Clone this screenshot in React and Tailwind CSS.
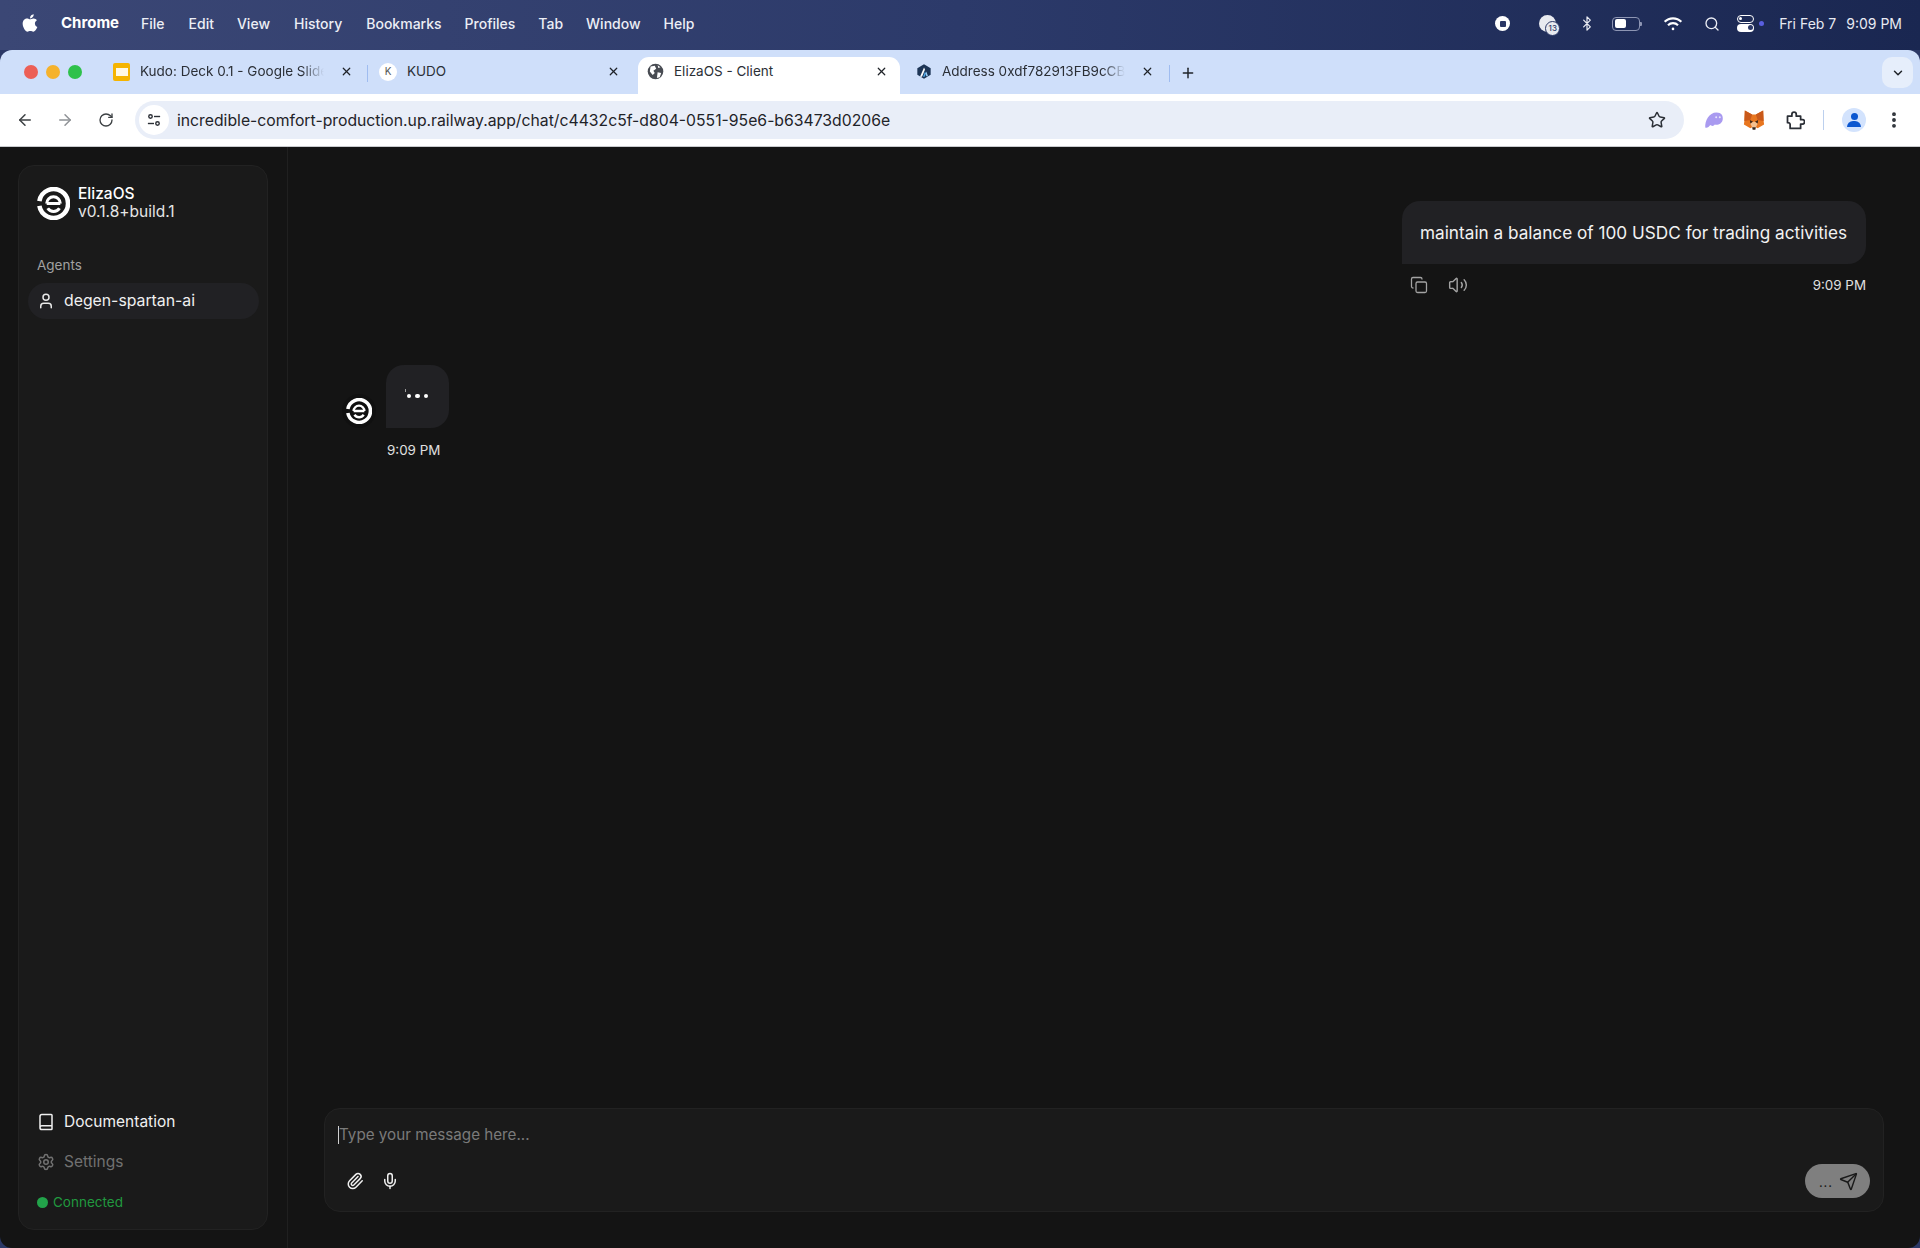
import React from "react";
import { Book, Bluetooth, ChevronDown, Copy, EllipsisVertical, ArrowLeft, ArrowRight, RotateCw, Star, Plus, X, Search, Mic, Paperclip, Send, Settings, User, Volume2 } from "lucide-react";
import { FaApple } from "react-icons/fa";

function ElizaLogo({ className }) {
  return (
    <svg viewBox="0 0 32 32" className={className} fill="none">
      <path d="M2.3 13.6 A14 14 0 1 1 2.3 18.4" stroke="#fff" strokeWidth="4.4" />
      <path d="M9.4 16 H22.6 M9.4 16 A6.6 6.6 0 0 1 22.6 16" stroke="#fff" strokeWidth="2.9" />
      <path d="M10.4 20.6 A6.8 6.8 0 0 0 21.8 20.6" stroke="#fff" strokeWidth="3" />
    </svg>
  );
}

function Fox() {
  return (
    <svg viewBox="0 0 24 24" className="w-[22px] h-[22px]">
      <path d="M2 1.5 L10 6 H14 L22 1.5 L22.5 13 L23 17 L16 21 L14 20 H10 L8 21 L1 17 L1.5 13 Z" fill="#e8761f" />
      <path d="M2 1.5 L10 6 L8 12 L1.5 13 Z M22 1.5 L14 6 L16 12 L22.5 13 Z" fill="#c9591a" />
      <path d="M7.5 12 L11 14 L8 16 Z M16.5 12 L13 14 L16 16 Z" fill="#3b2a1e" />
      <path d="M8 16 L11 14 H13 L16 16 L14 20 H10 Z" fill="#f3c08f" />
      <path d="M10 20 H14 L13.5 22.5 H10.5 Z" fill="#33261c" />
    </svg>
  );
}

function Ghost() {
  return (
    <svg viewBox="0 0 24 24" className="w-[20px] h-[20px]">
      <path d="M1.5 21 C1 13 6 3 15 3 C21 3 23 7 22.5 11 C22 16 17 18.5 13 17.5 C11.5 20 8.5 19 7.5 18 C6 20.5 3.5 22 1.5 21 Z" fill="#a99af0" />
      <circle cx="14.6" cy="8.6" r="1.2" fill="#e8e4fb" />
      <circle cx="19" cy="8.6" r="1.2" fill="#e8e4fb" />
    </svg>
  );
}

function ExtensionIcon() {
  return (
    <svg viewBox="0 0 24 24" className="w-[21px] h-[21px]" fill="none" stroke="#2b2f36" strokeWidth="2" strokeLinejoin="round">
      <path d="M4 7 H9 V5 A2.5 2.5 0 0 1 14 5 V7 H19 V11 H21 A2.5 2.5 0 0 1 21 16 H19 V21 H7 V16.5 A2.5 2.5 0 0 0 4 14.5 Z" />
    </svg>
  );
}

function Tab({ children, title, w, active, fade }) {
  return (
    <div className={`relative flex items-center h-[37px] pb-[8px] shrink-0 ${w} ${active ? "bg-white rounded-t-[11px]" : ""}`}>
      {children}
      <span className={`text-[13.5px] text-[#2b2f36] whitespace-nowrap overflow-hidden flex-1 ${fade ? "mr-[16px] [mask-image:linear-gradient(to_right,#000_88%,transparent)]" : ""}`}>{title}</span>
      <X className="w-[13px] h-[13px] text-[#1f2328] shrink-0" strokeWidth={2.2} />
    </div>
  );
}

function MenuBar() {
  const items = [
    ["File", "ml-[22px]"],
    ["Edit", "ml-[24px]"],
    ["View", "ml-[23px]"],
    ["History", "ml-[24px]"],
    ["Bookmarks", "ml-[24px]"],
    ["Profiles", "ml-[23px]"],
    ["Tab", "ml-[23px]"],
    ["Window", "ml-[23px]"],
    ["Help", "ml-[23px]"],
  ];
  return (
    <div className="h-[50px] flex items-center bg-gradient-to-r from-[#3b4775] via-[#2c3a6a] to-[#1a2751] text-white text-[14px] font-medium pl-[21px] pr-[18px] pb-[3px]">
      <FaApple className="w-[18px] h-[20px] text-white mb-[2px]" />
      <span className="ml-[22px] font-bold text-[15px]">Chrome</span>
      {items.map(([t, m]) => (
        <span key={t} className={`${m} text-[#eceef5]`}>{t}</span>
      ))}
      <div className="flex-1" />
      <span className="w-[15px] h-[15px] rounded-full bg-white flex items-center justify-center">
        <span className="w-[6px] h-[6px] bg-[#2a3766] rounded-[1px]" />
      </span>
      <span className="relative ml-[29px] w-[17px] h-[17px] rounded-full bg-[#e8eaf0]">
        <span className="absolute left-[6px] top-[6px] w-[15px] h-[15px] rounded-full bg-[#e8eaf0] border border-[#2a3766] text-[8px] leading-[13px] text-center text-[#2a3766]">13</span>
      </span>
      <Bluetooth className="ml-[23px] w-[16px] h-[19px] text-[#eceef5]" strokeWidth={1.8} />
      <span className="relative ml-[17px] w-[28px] h-[14px] rounded-[4px] border border-[#8d95b3] p-[1.5px] flex">
        <span className="w-[11px] h-full rounded-[2px] bg-white" />
        <span className="absolute right-[-3px] top-[4px] w-[2px] h-[4px] rounded-r-[1px] bg-[#8d95b3]" />
      </span>
      <svg viewBox="0 0 24 18" className="ml-[23px] w-[20px] h-[15px]" fill="none" stroke="#fff" strokeWidth="2.6">
        <path d="M2 7 A14 14 0 0 1 22 7" />
        <path d="M6 11 A8.5 8.5 0 0 1 18 11" />
        <circle cx="12" cy="15.5" r="1.6" fill="#fff" stroke="none" />
      </svg>
      <Search className="ml-[21px] w-[16px] h-[16px] text-[#eceef5]" strokeWidth={2} />
      <span className="ml-[17px] flex flex-col gap-[1px]">
        <span className="w-[17px] h-[8px] rounded-full border-[1.5px] border-white flex justify-start p-[1px]"><span className="w-[3px] h-[3px] rounded-full bg-white" /></span>
        <span className="w-[17px] h-[8px] rounded-full bg-white flex justify-end p-[1px]"><span className="w-[5px] h-[5px] rounded-full bg-[#2a3766]" /></span>
      </span>
      <span className="ml-[5px] w-[5px] h-[5px] rounded-full bg-[#5a5fe0]" />
      <span className="ml-[15px] text-[14px] font-normal text-[#e8eaf2]">Fri Feb 7</span>
      <span className="ml-[10px] text-[14px] font-normal text-[#e8eaf2]">9:09 PM</span>
    </div>
  );
}

function TabStrip() {
  return (
    <div className="h-[44px] bg-[#cfdffa] rounded-t-[12px] flex items-end pl-[24px] pr-[7px]">
      <div className="h-[44px] flex items-center gap-[8px] w-[89px] shrink-0">
        <span className="w-[14px] h-[14px] rounded-full bg-[#ec5f56]" />
        <span className="w-[14px] h-[14px] rounded-full bg-[#f5b22c]" />
        <span className="w-[14px] h-[14px] rounded-full bg-[#2ec14a]" />
      </div>
      <Tab title="Kudo: Deck 0.1 - Google Slides" w="w-[240px]" fade>
        <span className="w-[17px] h-[18px] rounded-[2px] bg-[#f5b400] flex items-center justify-center mr-[10px]">
          <span className="w-[12px] h-[8px] bg-[#fff8e3]" />
        </span>
      </Tab>
      <span className="w-px h-[17px] bg-[#9fbcf0] mb-[12px] ml-[14px] shrink-0" />
      <div className="w-[11px] shrink-0" />
      <Tab title="KUDO" w="w-[241px]">
        <span className="w-[18px] h-[18px] rounded-full bg-white text-[10px] text-[#555] flex items-center justify-center mr-[10px]">K</span>
      </Tab>
      <div className="w-[18px] shrink-0" />
      <Tab title="ElizaOS - Client" w="w-[262px] pl-[9px] pr-[12px]" active>
        <svg viewBox="0 0 24 24" className="w-[17px] h-[17px] mr-[10px] shrink-0">
          <circle cx="12" cy="12" r="11" fill="#474b52" />
          <path d="M5 5 L11 4 L13 8 L9 11 L11 14 L8 17 L4 12 Z M15 13 L20 14 L18 20 L14 21 Z M15 3 L19 6 L16 7 Z" fill="#fff" />
        </svg>
      </Tab>
      <div className="w-[16px] shrink-0" />
      <Tab title="Address 0xdf782913FB9cCB9" w="w-[238px]" fade>
        <svg viewBox="0 0 24 24" className="w-[16px] h-[17px] mr-[10px] shrink-0">
          <path d="M12 1 L22 7 V17 L12 23 L2 17 V7 Z" fill="#1d3556" />
          <path d="M12 6 L6 20 H9 L13.5 9 Z" fill="#fff" />
          <path d="M13.5 12 L10.5 20 H13 L15 15 Z" fill="#4fa8e8" />
          <path d="M15.5 12 L18 19 H15.5 L14.5 15 Z" fill="#9fd0f5" />
        </svg>
      </Tab>
      <span className="w-px h-[17px] bg-[#9fbcf0] mb-[12px] ml-[15px] shrink-0" />
      <Plus className="w-[16px] h-[16px] text-[#1f2328] ml-[10px] mb-[13px]" strokeWidth={2.2} />
      <div className="flex-1" />
      <span className="w-[31px] h-[31px] mb-[6px] rounded-[10px] bg-[#e6eefb] flex items-center justify-center">
        <ChevronDown className="w-[14px] h-[14px] text-[#1f2328]" strokeWidth={2.5} />
      </span>
    </div>
  );
}

function Toolbar() {
  return (
    <div className="h-[53px] bg-white border-b border-[#c9cbce] flex items-center pl-[16px] pr-[13px]">
      <ArrowLeft className="w-[18px] h-[18px] text-[#3c4043]" strokeWidth={2} />
      <ArrowRight className="ml-[22px] w-[18px] h-[18px] text-[#8f9296]" strokeWidth={2} />
      <RotateCw className="ml-[24px] w-[16px] h-[16px] text-[#3c4043]" strokeWidth={2} />
      <div className="ml-[21px] w-[1549px] h-[38px] rounded-full bg-[#e9eef8] flex items-center pl-[4px] pr-[18px]">
        <span className="w-[30px] h-[30px] rounded-full bg-white flex items-center justify-center">
          <svg viewBox="0 0 16 16" className="w-[14px] h-[14px]" fill="none" stroke="#2b2f36" strokeWidth="1.6">
            <circle cx="4" cy="4" r="2" />
            <path d="M8 4 H15" />
            <circle cx="12" cy="12" r="2" />
            <path d="M1 12 H8" />
          </svg>
        </span>
        <span className="ml-[8px] mt-[1px] text-[15.75px] text-[#1f2328] flex-1 whitespace-nowrap">incredible-comfort-production.up.railway.app/chat/c4432c5f-d804-0551-95e6-b63473d0206e</span>
        <Star className="w-[18px] h-[18px] text-[#2b2f36]" strokeWidth={2} />
      </div>
      <span className="ml-[20px]"><Ghost /></span>
      <span className="ml-[19px]"><Fox /></span>
      <span className="ml-[19px]"><ExtensionIcon /></span>
      <span className="ml-[18px] w-px h-[20px] bg-[#bcd0ee]" />
      <span className="ml-[18px] w-[24px] h-[24px] rounded-full bg-[#d3e3fd] overflow-hidden flex flex-col items-center justify-center">
        <span className="w-[7px] h-[7px] rounded-full bg-[#0b57d0]" />
        <span className="w-[14px] h-[6px] mt-[1px] rounded-t-full bg-[#0b57d0]" />
      </span>
      <EllipsisVertical className="ml-[18px] w-[20px] h-[20px] text-[#2b2f36]" strokeWidth={2.6} />
    </div>
  );
}

function Sidebar() {
  return (
    <aside className="w-[288px] shrink-0 border-r border-[#202020] pl-[18px] pr-[19px] pt-[18px] pb-[18px] flex">
      <div className="w-full rounded-[16px] border border-[#222222] bg-[#1a1a1a] flex flex-col">
        <div className="flex items-center pl-[18px] pt-[19px]">
          <ElizaLogo className="w-[33px] h-[33px]" />
          <div className="ml-[8px] text-white text-[15.5px] leading-[18px]">
            <div className="font-medium">ElizaOS</div>
            <div className="text-[#e5e5e5]">v0.1.8+build.1</div>
          </div>
        </div>
        <div className="mt-[34px] pl-[18px] text-[13.5px] leading-[20px] text-[#a1a1a1]">Agents</div>
        <div className="ml-[9px] mr-[8px] mt-[8px] h-[36px] rounded-[18px] bg-[#212124] flex items-center pl-[9px] text-[15.8px] text-[#f0f0f0]">
          <User className="w-[18px] h-[18px] mr-[9px] text-[#e8e8e8]" strokeWidth={2} />
          degen-spartan-ai
        </div>
        <div className="flex-1" />
        <div className="mx-[9px] flex items-center pl-[9px] h-[40px] text-[15.5px] text-[#f0f0f0]">
          <Book className="w-[18px] h-[18px] mr-[9px]" strokeWidth={2} />
          Documentation
        </div>
        <div className="mx-[9px] flex items-center pl-[9px] h-[40px] text-[15.5px] text-[#717171]">
          <Settings className="w-[18px] h-[18px] mr-[9px]" strokeWidth={2} />
          Settings
        </div>
        <div className="mt-[10px] mb-[17px] pl-[18px] flex items-center text-[13.5px] leading-[20px] text-[#21993f]">
          <span className="w-[11px] h-[11px] rounded-full bg-[#22a34a] mr-[5px]" />
          Connected
        </div>
      </div>
    </aside>
  );
}

function Chat() {
  return (
    <main className="flex-1 flex flex-col pl-[36px] pr-[36px] pb-[36px] min-w-0">
      <div className="flex-1 min-h-0 flex flex-col">
        <div className="self-end mt-[54px] mr-[18px] w-[464px]">
          <div className="h-[63px] rounded-[18px] rounded-bl-none bg-[#212124] flex items-center pl-[18px] text-[17.2px] text-[#f2f2f2] whitespace-nowrap">
            maintain a balance of 100 USDC for trading activities
          </div>
          <div className="mt-[11px] flex items-center pl-[8px] text-[13.4px] leading-[20px] text-[#e0e0e0]">
            <Copy className="w-[18px] h-[18px] text-[#a3a3a3]" strokeWidth={1.7} />
            <Volume2 className="ml-[20px] w-[20px] h-[20px] text-[#a3a3a3]" strokeWidth={1.7} />
            <span className="ml-auto">9:09 PM</span>
          </div>
        </div>
        <div className="mt-[70px] ml-[18px] flex items-end">
          <div className="mr-[10px] w-[34px] h-[34px] rounded-full bg-[#101010] flex items-center justify-center">
            <ElizaLogo className="w-[26px] h-[26px]" />
          </div>
          <div className="relative w-[63px] h-[63px] rounded-[18px] rounded-bl-none bg-[#212124] flex items-center justify-center gap-[4px] pb-[1px]">
            <span className="absolute left-[19px] top-[24px] w-px h-[3px] bg-[#9a9a9a]" />
            <span className="w-[4.5px] h-[4.5px] rounded-full bg-white" />
            <span className="w-[4.5px] h-[4.5px] rounded-full bg-white" />
            <span className="w-[4.5px] h-[4.5px] rounded-full bg-white" />
          </div>
        </div>
        <div className="mt-[12px] ml-[63px] text-[13.4px] leading-[20px] text-[#e0e0e0]">9:09 PM</div>
      </div>
      <div className="h-[104px] rounded-[16px] border border-[#222222] bg-[#1a1a1a] flex flex-col pl-[13px] pr-[14px] pt-[14px] pb-[13px]">
        <div className="flex items-center h-[24px] text-[15.2px] text-[#7a7a7a]">
          <span className="w-px h-[18px] bg-[#d0d0d0]" />
          Type your message here...
        </div>
        <div className="mt-auto flex items-center">
          <Paperclip className="ml-[8px] w-[18px] h-[18px] text-[#f0f0f0]" strokeWidth={2} />
          <Mic className="ml-[17px] w-[18px] h-[18px] text-[#f0f0f0]" strokeWidth={2} />
          <div className="ml-auto mr-[-1px] w-[65px] h-[34px] rounded-full bg-[#7f7f7f] flex items-center justify-center gap-[6px] pl-[2px] text-[#1a1a1a]">
            <span className="text-[13px] leading-none tracking-[1px] mt-[2px]">...</span>
            <Send className="w-[19px] h-[19px]" strokeWidth={1.8} />
          </div>
        </div>
      </div>
    </main>
  );
}

export default function App() {
  return (
    <div className="h-[1248px] w-[1920px] overflow-hidden flex flex-col bg-[#2b3866] font-['Inter','Noto_Sans',sans-serif]">
      <MenuBar />
      <TabStrip />
      <Toolbar />
      <div className="flex-1 min-h-0 flex bg-[#141414] rounded-b-[12px]">
        <Sidebar />
        <Chat />
      </div>
    </div>
  );
}
